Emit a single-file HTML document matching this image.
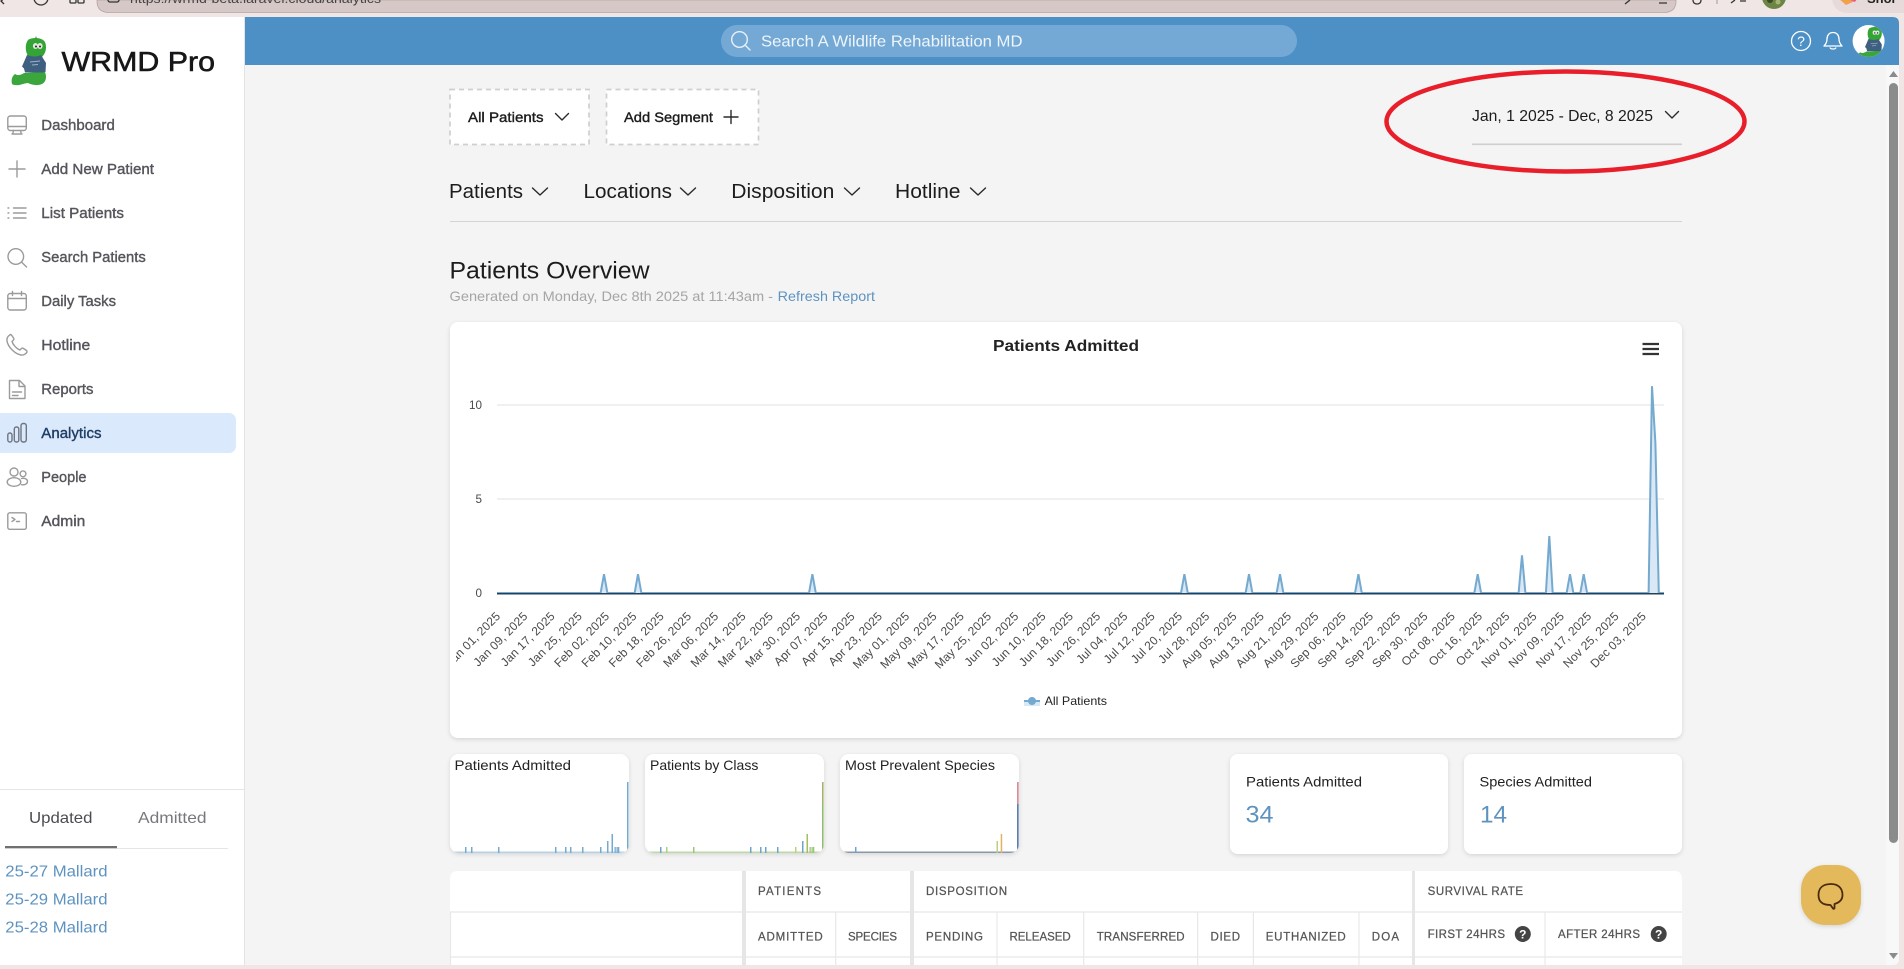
<!DOCTYPE html>
<html lang="en">
<head>
<meta charset="utf-8">
<title>WRMD Pro - Analytics</title>
<style>
html,body{margin:0;padding:0;width:1904px;height:969px;overflow:hidden;background:#f0e6e5}
svg{display:block}
text{font-family:"Liberation Sans",Arial,sans-serif;white-space:pre}
.nav{font-size:14.5px;fill:#55555c;stroke:#55555c;stroke-width:.38px}
.ico{fill:none;stroke:#9b9b9b;stroke-width:1.4;stroke-linecap:round;stroke-linejoin:round}
.th{font-size:11.5px;fill:#555;stroke:#555;stroke-width:.25px}
.ax{font-size:12px;fill:#4a4a4a}
.xl text{letter-spacing:.12px}
.dk{fill:#1c1c1f}
.ch{fill:none;stroke:#2a2a2e;stroke-width:1.4;stroke-linecap:round;stroke-linejoin:round}
.lk{fill:#5e93c0}
.gl{stroke:#e6e6e6;stroke-width:1.2}
.sep{stroke:#e8e8e8;stroke-width:1.2}
</style>
</head>
<body>
<svg xmlns="http://www.w3.org/2000/svg" width="1904" height="969" viewBox="0 0 1904 969">
<defs>
<filter id="sh" x="-5%" y="-5%" width="110%" height="112%"><feDropShadow dx="0" dy="1.5" stdDeviation="2" flood-color="#000" flood-opacity=".13"/></filter>
<clipPath id="xl"><rect x="456" y="600" width="1230" height="90"/></clipPath>
<clipPath id="av"><circle cx="1868.6" cy="41" r="16"/></clipPath>
<clipPath id="c1"><rect x="450" y="754" width="179" height="99" rx="9"/></clipPath>
<clipPath id="c2"><rect x="645" y="754" width="179" height="99" rx="9"/></clipPath>
<clipPath id="c3"><rect x="840" y="754" width="179" height="99" rx="9"/></clipPath>
<g id="mascot">
<path d="M12 84c-1-4 0-8 3-10 3 2 6 1 9-1 6 0 14-1 21-1 2 5 1 10-3 12-5 2-10 1-14-1-4 0-9 3-12 2-1 0-3 0-4-1z" fill="#3ba63c"/>
<path d="M28 40c4-3 14-3 17 2 2 5 1 11-3 15-5 2-11 2-14-1-3-5-3-12 0-16z" fill="#34a435"/>
<path d="M35 38l1-2 1 2z" fill="#8a9a8a"/>
<path d="M27 55c6 2 10 2 14 0l5 8-.5 9-3 .5H25l-1-4-2-2z" fill="#3f5f80"/>
<ellipse cx="35.500" cy="46" rx="2.600" ry="3" fill="#dfe8dc"/><ellipse cx="40" cy="46" rx="2.600" ry="3" fill="#dfe8dc"/>
<circle cx="36" cy="46.500" r="1" fill="#222"/><circle cx="40" cy="46.500" r="1" fill="#222"/>
<path d="M30 62l10-1M32 65l6-.5" stroke="#9db2c6" stroke-width="1"/>
</g>
</defs>

<!-- browser chrome -->
<rect width="1904" height="969" fill="#f0e6e5"/>
<path d="M97 0h1579v1q0 11.500-12 11.500H109Q97 12.500 97 1z" fill="#d6c8c6" stroke="#b5a5a3" stroke-width=".8"/>
<text x="130" y="3" font-size="13" fill="#444" textLength="251" lengthAdjust="spacingAndGlyphs">https://wrmd-beta.laravel.cloud/analytics</text>
<g fill="none" stroke="#333" stroke-width="1.300">
<path d="M6-3L1 1l3 3"/><circle cx="41" cy="-2" r="7"/><rect x="70" y="-6" width="6" height="9" rx="1"/><rect x="78" y="-6" width="6" height="9" rx="1"/><rect x="108" y="-6" width="11" height="8" rx="2"/>
<path d="M1625 4l5-4M1659 3h8M1693 0c0 3 2 4 4 4s4-1 4-4M1731 3l4-3M1740 1h6"/></g>
<path d="M1717 0v4" stroke="#888" stroke-width=".8"/>
<circle cx="1774" cy="-3" r="12" fill="#6c8444"/><circle cx="1770" cy="0" r="3" fill="#3a4a26"/><circle cx="1778" cy="2" r="2.500" fill="#a4b478"/>
<rect x="1832" y="-20" width="90" height="33" rx="15" fill="#e7dada"/>
<path d="M1838-2l8 7 9-4 4-6h-20z" fill="#f2a04e"/><path d="M1846-2l9 4 4-6h-11z" fill="#e85a8a"/>
<text x="1867" y="3" font-size="13" font-weight="bold" fill="#222">Shor</text>

<!-- page background -->
<path d="M0 17H1893q6 0 6 6V959q0 6-6 6H0z" fill="#f4f4f4"/>

<!-- sidebar -->
<rect x="0" y="17" width="244" height="948" fill="#fff"/>
<rect x="244" y="17" width="1" height="948" fill="#e4e4e4"/>
<use href="#mascot"/>
<text x="61.500" y="71" font-size="27.500" fill="#17171a" stroke="#17171a" stroke-width=".55" textLength="153.500" lengthAdjust="spacingAndGlyphs">WRMD Pro</text>

<rect x="-10" y="413" width="246" height="40" rx="7" fill="#dbe9fc"/>
<g class="ico">
<rect x="7.800" y="116" width="18.500" height="14.500" rx="2.500"/><path d="M8 126.500h18M12 134h10M13.500 130.500l-.8 3.500M20.500 130.500l.8 3.500"/>
<path d="M17 161v16M9 169h16"/>
<path d="M13.500 208h12.500M13.500 213h12.500M13.500 218h12.500M8 208h.8M8 213h.8M8 218h.8"/>
<circle cx="15.800" cy="256.500" r="7.800"/><path d="M21.500 262l5 5"/>
<rect x="7.800" y="293.500" width="18.500" height="16.500" rx="2.500"/><path d="M8 298.500h18M12.500 291.500v4M21.500 291.500v4"/>
<path d="M10 335c-2 1-3.500 3-3 6 1 6 8 13 14 14 2.500.3 5-1 6-3 .3-.7 0-1-.5-1.500l-3-2c-.7-.5-1.500-.5-2 0l-1.500 1.500c-3-1-7-5-8-8.500l1.500-1.500c.5-.5.5-1.500 0-2l-2-3c-.3-.5-1-.7-1.500-.3z"/>
<path d="M9.500 380.500h10l5.500 5.500v12.500h-15.500zM19 380.500v6h6M12.500 392h9M12.500 395.500h5.500"/>
<g stroke="#6e7480"><rect x="7.800" y="433" width="4.200" height="9" rx="2"/><rect x="14.300" y="427" width="4.500" height="15" rx="2"/><rect x="21" y="423.500" width="5.300" height="18.500" rx="2.200"/></g>
<circle cx="14" cy="472" r="4"/><circle cx="23" cy="473.800" r="2.900"/><ellipse cx="14" cy="482" rx="6.800" ry="4.300"/><path d="M21.500 478.500c3-.7 6 .5 6 3s-3 3.700-6 3.200"/>
<rect x="7.800" y="512.800" width="18.500" height="16.500" rx="2"/><path d="M12 517.500l3 2-3 2M16.500 521.500h3"/>
</g>
<text class="nav" x="41.300" y="130" textLength="73.500" lengthAdjust="spacingAndGlyphs">Dashboard</text>
<text class="nav" x="41.300" y="174" textLength="112.700" lengthAdjust="spacingAndGlyphs">Add New Patient</text>
<text class="nav" x="41.300" y="218" textLength="82.700" lengthAdjust="spacingAndGlyphs">List Patients</text>
<text class="nav" x="41.300" y="262" textLength="104.500" lengthAdjust="spacingAndGlyphs">Search Patients</text>
<text class="nav" x="41.300" y="306" textLength="74.700" lengthAdjust="spacingAndGlyphs">Daily Tasks</text>
<text class="nav" x="41.300" y="350" textLength="49" lengthAdjust="spacingAndGlyphs">Hotline</text>
<text class="nav" x="41.300" y="394" textLength="52.200" lengthAdjust="spacingAndGlyphs">Reports</text>
<text class="nav" x="41.300" y="438" textLength="60.200" lengthAdjust="spacingAndGlyphs" style="fill:#1f3f66;stroke:#1f3f66">Analytics</text>
<text class="nav" x="41.300" y="482" textLength="45.200" lengthAdjust="spacingAndGlyphs">People</text>
<text class="nav" x="41.300" y="526" textLength="44" lengthAdjust="spacingAndGlyphs">Admin</text>

<rect x="0" y="789" width="244" height="1" fill="#e5e5e5"/>
<text x="29" y="823" font-size="16" fill="#4b4b52" textLength="63.500" lengthAdjust="spacingAndGlyphs">Updated</text>
<text x="138" y="823" font-size="16" fill="#77777e" textLength="68.500" lengthAdjust="spacingAndGlyphs">Admitted</text>
<rect x="5" y="848" width="223" height="1" fill="#e5e5e5"/>
<rect x="5" y="846" width="112" height="2.200" fill="#707070"/>
<text class="lk" x="5.300" y="876.700" font-size="16" textLength="102.200" lengthAdjust="spacingAndGlyphs">25-27 Mallard</text>
<text class="lk" x="5.300" y="904.700" font-size="16" textLength="102.200" lengthAdjust="spacingAndGlyphs">25-29 Mallard</text>
<text class="lk" x="5.300" y="932.700" font-size="16" textLength="102.200" lengthAdjust="spacingAndGlyphs">25-28 Mallard</text>

<!-- header -->
<path d="M245 17H1893q6 0 6 6V65H245z" fill="#4d90c6"/>
<rect x="721" y="25" width="576" height="32" rx="16" fill="#74a9d6"/>
<circle cx="739.500" cy="39.500" r="7.800" fill="none" stroke="#e8f1f9" stroke-width="1.400"/><path d="M745 45l5 5" stroke="#e8f1f9" stroke-width="1.400" stroke-linecap="round"/>
<text x="761" y="46.500" font-size="16" fill="#eef5fb" textLength="261.500" lengthAdjust="spacingAndGlyphs">Search A Wildlife Rehabilitation MD</text>
<circle cx="1801" cy="41" r="9.500" fill="none" stroke="#fff" stroke-width="1.300"/>
<text x="1801" y="46" font-size="14" fill="#fff" text-anchor="middle">?</text>
<path d="M1833 32.500c-4 0-6 3-6 6.500 0 3-1 5-3 7h18c-2-2-3-4-3-7 0-3.500-2-6.500-6-6.500zM1830 47.500c.5 2 5.500 2 6 0" fill="none" stroke="#fff" stroke-width="1.300" stroke-linejoin="round"/>
<circle cx="1868.600" cy="41" r="16" fill="#fff"/>
<g clip-path="url(#av)"><use href="#mascot" transform="translate(1858 27) scale(.7) translate(-12 -38)"/></g>

<!-- filter row -->
<rect x="450" y="89.500" width="139" height="55" fill="#fff" stroke="#cfcfcf" stroke-width="1.700" stroke-dasharray="5 4"/>
<rect x="606.500" y="89.500" width="152" height="55" fill="#fff" stroke="#cfcfcf" stroke-width="1.700" stroke-dasharray="5 4"/>
<text x="468" y="122" font-size="14" class="dk" stroke="#1c1c1f" stroke-width=".38" textLength="75.500" lengthAdjust="spacingAndGlyphs">All Patients</text>
<path class="ch" d="M555.500 113.500l6.500 6.500 6.500-6.500"/>
<text x="624" y="122" font-size="14" class="dk" stroke="#1c1c1f" stroke-width=".38" textLength="89" lengthAdjust="spacingAndGlyphs">Add Segment</text>
<path class="ch" d="M731 110.500v13M724 117h14"/>

<text x="1472" y="121" font-size="16" class="dk" textLength="181" lengthAdjust="spacingAndGlyphs">Jan, 1 2025 - Dec, 8 2025</text>
<path class="ch" d="M1665.500 111.500l6.500 6.500 6.500-6.500"/>
<rect x="1472" y="143.500" width="210" height="1.600" fill="#cfcfcf"/>

<text x="449" y="198" font-size="20" class="dk" textLength="74" lengthAdjust="spacingAndGlyphs">Patients</text>
<path class="ch" d="M532.500 188l7.500 7 7.500-7"/>
<text x="583.500" y="198" font-size="20" class="dk" textLength="88.500" lengthAdjust="spacingAndGlyphs">Locations</text>
<path class="ch" d="M680.500 188l7.500 7 7.500-7"/>
<text x="731.300" y="198" font-size="20" class="dk" textLength="103" lengthAdjust="spacingAndGlyphs">Disposition</text>
<path class="ch" d="M844.500 188l7.500 7 7.500-7"/>
<text x="895" y="198" font-size="20" class="dk" textLength="65.500" lengthAdjust="spacingAndGlyphs">Hotline</text>
<path class="ch" d="M970.500 188l7.500 7 7.500-7"/>
<rect x="450" y="221" width="1232" height="1" fill="#d4d4d4"/>

<!-- red annotation -->
<ellipse cx="1565.500" cy="121.500" rx="179" ry="50" fill="none" stroke="#e81f2a" stroke-width="4.500"/>

<!-- overview heading -->
<text x="449.500" y="278.700" font-size="24" class="dk" textLength="200" lengthAdjust="spacingAndGlyphs">Patients Overview</text>
<text x="449.500" y="301" font-size="14" fill="#a5a5a5" textLength="323.500" lengthAdjust="spacingAndGlyphs">Generated on Monday, Dec 8th 2025 at 11:43am -</text>
<text class="lk" x="777.700" y="301" font-size="14" textLength="97.300" lengthAdjust="spacingAndGlyphs">Refresh Report</text>

<!-- main chart card -->
<rect x="450" y="322" width="1232" height="416" rx="8" fill="#fff" filter="url(#sh)"/>
<text x="993" y="351" font-size="16" font-weight="bold" fill="#222" textLength="146" lengthAdjust="spacingAndGlyphs">Patients Admitted</text>
<path d="M1642.500 344h16.500M1642.500 349h16.500M1642.500 354h16.500" stroke="#333" stroke-width="2.200"/>
<path class="gl" d="M497 405H1664M497 499H1664" fill="none"/>
<text class="ax" x="469" y="409" textLength="13" lengthAdjust="spacingAndGlyphs">10</text>
<text class="ax" x="475.500" y="503" textLength="6.500" lengthAdjust="spacingAndGlyphs">5</text>
<text class="ax" x="475.500" y="597" textLength="6.500" lengthAdjust="spacingAndGlyphs">0</text>
<path d="M497 593H600.600L604 574.200L607.400 593H634.600L638 574.200L641.400 593H809L812.400 574.200L815.800 593H1181L1184.400 574.200L1187.800 593H1245.600L1249 574.200L1252.400 593H1276.600L1280 574.200L1283.400 593H1355L1358.400 574.200L1361.800 593H1474.300L1477.700 574.200L1481.100 593H1518.600L1522 555.400L1525.400 593H1545.900L1549.300 536L1552.700 593H1566.600L1570 574.200L1573.400 593H1580.300L1583.700 574.200L1587.100 593H1648.600L1652 386.200L1655.400 443L1658.800 593H1664" fill="#d9e8f4" stroke="#74a9d0" stroke-width="2" stroke-linejoin="miter"/>
<path d="M497 593.700H1664" stroke="#24405a" stroke-width="1.500"/>

<g clip-path="url(#xl)" class="ax xl">
<text transform="translate(501 617) rotate(-45)" text-anchor="end">Jan 01, 2025</text>
<text transform="translate(528.300 617) rotate(-45)" text-anchor="end">Jan 09, 2025</text>
<text transform="translate(555.600 617) rotate(-45)" text-anchor="end">Jan 17, 2025</text>
<text transform="translate(582.800 617) rotate(-45)" text-anchor="end">Jan 25, 2025</text>
<text transform="translate(610.100 617) rotate(-45)" text-anchor="end">Feb 02, 2025</text>
<text transform="translate(637.400 617) rotate(-45)" text-anchor="end">Feb 10, 2025</text>
<text transform="translate(664.700 617) rotate(-45)" text-anchor="end">Feb 18, 2025</text>
<text transform="translate(692 617) rotate(-45)" text-anchor="end">Feb 26, 2025</text>
<text transform="translate(719.200 617) rotate(-45)" text-anchor="end">Mar 06, 2025</text>
<text transform="translate(746.500 617) rotate(-45)" text-anchor="end">Mar 14, 2025</text>
<text transform="translate(773.800 617) rotate(-45)" text-anchor="end">Mar 22, 2025</text>
<text transform="translate(801.100 617) rotate(-45)" text-anchor="end">Mar 30, 2025</text>
<text transform="translate(828.400 617) rotate(-45)" text-anchor="end">Apr 07, 2025</text>
<text transform="translate(855.600 617) rotate(-45)" text-anchor="end">Apr 15, 2025</text>
<text transform="translate(882.900 617) rotate(-45)" text-anchor="end">Apr 23, 2025</text>
<text transform="translate(910.200 617) rotate(-45)" text-anchor="end">May 01, 2025</text>
<text transform="translate(937.500 617) rotate(-45)" text-anchor="end">May 09, 2025</text>
<text transform="translate(964.800 617) rotate(-45)" text-anchor="end">May 17, 2025</text>
<text transform="translate(992 617) rotate(-45)" text-anchor="end">May 25, 2025</text>
<text transform="translate(1019.300 617) rotate(-45)" text-anchor="end">Jun 02, 2025</text>
<text transform="translate(1046.600 617) rotate(-45)" text-anchor="end">Jun 10, 2025</text>
<text transform="translate(1073.900 617) rotate(-45)" text-anchor="end">Jun 18, 2025</text>
<text transform="translate(1101.200 617) rotate(-45)" text-anchor="end">Jun 26, 2025</text>
<text transform="translate(1128.400 617) rotate(-45)" text-anchor="end">Jul 04, 2025</text>
<text transform="translate(1155.700 617) rotate(-45)" text-anchor="end">Jul 12, 2025</text>
<text transform="translate(1183 617) rotate(-45)" text-anchor="end">Jul 20, 2025</text>
<text transform="translate(1210.300 617) rotate(-45)" text-anchor="end">Jul 28, 2025</text>
<text transform="translate(1237.600 617) rotate(-45)" text-anchor="end">Aug 05, 2025</text>
<text transform="translate(1264.800 617) rotate(-45)" text-anchor="end">Aug 13, 2025</text>
<text transform="translate(1292.100 617) rotate(-45)" text-anchor="end">Aug 21, 2025</text>
<text transform="translate(1319.400 617) rotate(-45)" text-anchor="end">Aug 29, 2025</text>
<text transform="translate(1346.700 617) rotate(-45)" text-anchor="end">Sep 06, 2025</text>
<text transform="translate(1374 617) rotate(-45)" text-anchor="end">Sep 14, 2025</text>
<text transform="translate(1401.200 617) rotate(-45)" text-anchor="end">Sep 22, 2025</text>
<text transform="translate(1428.500 617) rotate(-45)" text-anchor="end">Sep 30, 2025</text>
<text transform="translate(1455.800 617) rotate(-45)" text-anchor="end">Oct 08, 2025</text>
<text transform="translate(1483.100 617) rotate(-45)" text-anchor="end">Oct 16, 2025</text>
<text transform="translate(1510.400 617) rotate(-45)" text-anchor="end">Oct 24, 2025</text>
<text transform="translate(1537.600 617) rotate(-45)" text-anchor="end">Nov 01, 2025</text>
<text transform="translate(1564.900 617) rotate(-45)" text-anchor="end">Nov 09, 2025</text>
<text transform="translate(1592.200 617) rotate(-45)" text-anchor="end">Nov 17, 2025</text>
<text transform="translate(1619.500 617) rotate(-45)" text-anchor="end">Nov 25, 2025</text>
<text transform="translate(1646.800 617) rotate(-45)" text-anchor="end">Dec 03, 2025</text>
</g>

<rect x="1024" y="701" width="16" height="5" fill="#d9e8f4"/>
<path d="M1024 701h16" stroke="#74a9d0" stroke-width="2"/><circle cx="1032" cy="701" r="4" fill="#74a9d0"/>
<text x="1044.600" y="705" font-size="12" fill="#222" textLength="62.400" lengthAdjust="spacingAndGlyphs">All Patients</text>

<!-- small chart cards -->
<rect x="450" y="754" width="179" height="99" rx="9" fill="#fff" filter="url(#sh)"/>
<rect x="645" y="754" width="179" height="99" rx="9" fill="#fff" filter="url(#sh)"/>
<rect x="840" y="754" width="179" height="99" rx="9" fill="#fff" filter="url(#sh)"/>
<text x="454.500" y="770" font-size="14" fill="#222" textLength="116.500" lengthAdjust="spacingAndGlyphs">Patients Admitted</text>
<text x="650" y="770" font-size="14" fill="#222" textLength="108.400" lengthAdjust="spacingAndGlyphs">Patients by Class</text>
<text x="845" y="770" font-size="14" fill="#222" textLength="150" lengthAdjust="spacingAndGlyphs">Most Prevalent Species</text>
<g clip-path="url(#c1)" fill="#74a9d0">
<rect x="450" y="851.500" width="179" height="1.500" fill="#b5d2e7"/>
<rect x="465" y="847" width="1.500" height="6"/><rect x="471" y="847" width="1.500" height="6"/><rect x="498" y="847" width="1.500" height="6"/><rect x="555" y="847" width="1.500" height="6"/><rect x="565" y="847" width="1.500" height="6"/><rect x="570" y="847" width="1.500" height="6"/><rect x="582" y="847" width="1.500" height="6"/><rect x="600" y="847" width="1.500" height="6"/><rect x="607" y="841" width="1.500" height="12"/><rect x="611.500" y="834" width="1.500" height="19"/><rect x="614.500" y="847" width="1.300" height="6"/><rect x="616.500" y="847" width="1.300" height="6"/><rect x="618" y="847" width="1.300" height="6"/><rect x="627" y="782" width="1.500" height="71"/>
</g>
<g clip-path="url(#c2)" fill="#6fa3cf">
<rect x="645" y="851.500" width="179" height="1.500" fill="#bcd9a6"/>
<rect x="660" y="847" width="1.500" height="6"/><rect x="666" y="847" width="1.500" height="6" fill="#a8d08a"/><rect x="693" y="847" width="1.500" height="6" fill="#9cc77a"/><rect x="750" y="847" width="1.500" height="6"/><rect x="760" y="847" width="1.500" height="6"/><rect x="765" y="847" width="1.500" height="6"/><rect x="777" y="847" width="1.500" height="6"/><rect x="795" y="847" width="1.500" height="6" fill="#c3cf7a"/><rect x="802" y="841" width="1.500" height="12"/><rect x="806.500" y="834" width="1.500" height="19" fill="#a6bf5c"/><rect x="809.500" y="847" width="1.300" height="6" fill="#9cc77a"/><rect x="811.500" y="847" width="1.300" height="6" fill="#9cc77a"/><rect x="813" y="847" width="1.300" height="6" fill="#9cc77a"/><rect x="822" y="782" width="1.600" height="22" fill="#a6b56a"/><rect x="822" y="804" width="1.600" height="49" fill="#8fbf6f"/>
</g>
<g clip-path="url(#c3)">
<rect x="840" y="851.500" width="179" height="1.500" fill="#8a98ad"/>
<rect x="855" y="847" width="1.500" height="6" fill="#6fa3cf"/><rect x="996.500" y="841" width="1.500" height="12" fill="#bcd07c"/><rect x="1000.700" y="834" width="1.500" height="19" fill="#e2b35c"/><rect x="1017" y="782" width="1.700" height="22" fill="#dd8a96"/><rect x="1017" y="804" width="1.700" height="49" fill="#5a7fb0"/>
</g>

<!-- stat cards -->
<rect x="1230" y="754" width="218" height="100" rx="8" fill="#fff" filter="url(#sh)"/>
<rect x="1464" y="754" width="218" height="100" rx="8" fill="#fff" filter="url(#sh)"/>
<text x="1246" y="786.700" font-size="14" fill="#222" textLength="116" lengthAdjust="spacingAndGlyphs">Patients Admitted</text>
<text x="1479.500" y="786.700" font-size="14" fill="#222" textLength="112.500" lengthAdjust="spacingAndGlyphs">Species Admitted</text>
<text class="lk" x="1245.500" y="822.300" font-size="24" textLength="28" lengthAdjust="spacingAndGlyphs">34</text>
<text class="lk" x="1480" y="822.300" font-size="24" textLength="27" lengthAdjust="spacingAndGlyphs">14</text>

<!-- table -->
<path d="M450 965V879q0-8 8-8H1674q8 0 8 8V965z" fill="#fff"/>
<path class="sep" d="M450 912H1682M450 957H1682M450.500 912V965" fill="none"/>
<path class="sep" d="M835.700 912V965M997 912V965M1083.700 912V965M1197.600 912V965M1253.400 912V965M1359 912V965M1545 912V965" fill="none"/>
<rect x="742" y="871" width="4" height="94" fill="#e6e6e6"/>
<rect x="910" y="871" width="4" height="94" fill="#e6e6e6"/>
<rect x="1412" y="871" width="3" height="94" fill="#e6e6e6"/>
<text class="th" x="758" y="895" textLength="63" lengthAdjust="spacing">PATIENTS</text>
<text class="th" x="926" y="895" textLength="81" lengthAdjust="spacing">DISPOSITION</text>
<text class="th" x="1427.600" y="895" textLength="95.400" lengthAdjust="spacing">SURVIVAL RATE</text>
<text class="th" x="758" y="940.300" textLength="64.700" lengthAdjust="spacing">ADMITTED</text>
<text class="th" x="848" y="940.300" textLength="49" lengthAdjust="spacing">SPECIES</text>
<text class="th" x="926" y="940.300" textLength="57" lengthAdjust="spacing">PENDING</text>
<text class="th" x="1009.500" y="940.300" textLength="61.200" lengthAdjust="spacing">RELEASED</text>
<text class="th" x="1096.700" y="940.300" textLength="87.900" lengthAdjust="spacing">TRANSFERRED</text>
<text class="th" x="1210.500" y="940.300" textLength="29.500" lengthAdjust="spacing">DIED</text>
<text class="th" x="1265.800" y="940.300" textLength="79.900" lengthAdjust="spacing">EUTHANIZED</text>
<text class="th" x="1371.700" y="940.300" textLength="27.300" lengthAdjust="spacing">DOA</text>
<text class="th" x="1427.600" y="938" textLength="77.400" lengthAdjust="spacing">FIRST 24HRS</text>
<text class="th" x="1558" y="938" textLength="82" lengthAdjust="spacing">AFTER 24HRS</text>
<circle cx="1522.800" cy="934" r="8" fill="#444"/><text x="1522.800" y="938.500" font-size="12" font-weight="bold" fill="#fff" text-anchor="middle">?</text>
<circle cx="1658.700" cy="934" r="8" fill="#444"/><text x="1658.700" y="938.500" font-size="12" font-weight="bold" fill="#fff" text-anchor="middle">?</text>

<!-- scrollbar -->
<rect x="1886" y="65" width="13" height="900" fill="#f8f8f8"/>
<rect x="1889" y="83" width="9" height="760" rx="4.500" fill="#8b8b8b"/>
<path d="M1889 77l4.500-6 4.500 6z" fill="#8b8b8b"/>
<path d="M1889 953l4.500 6 4.500-6z" fill="#8b8b8b"/>

<!-- chat button -->
<rect x="1801" y="865" width="60" height="60" rx="24" fill="#e3b95c" filter="url(#sh)"/>
<path d="M1831 884c-8 0-12.500 4-12.500 11s4 10 12 10l2.500 3.500c.5.500 1.500.5 1.500-.5v-4c5-1.500 8-4.500 8-9 0-7-4.500-11-11.500-11z" fill="none" stroke="#4a2a0c" stroke-width="1.800" stroke-linejoin="round"/>

<!-- window frame overlay -->
<path d="M1899 17h5v952H0v-4H1893q6 0 6-6z" fill="#f0e6e5"/>
<path d="M1893 17h6v6q0-6-6-6z" fill="#f0e6e5"/>
</svg>
</body>
</html>
